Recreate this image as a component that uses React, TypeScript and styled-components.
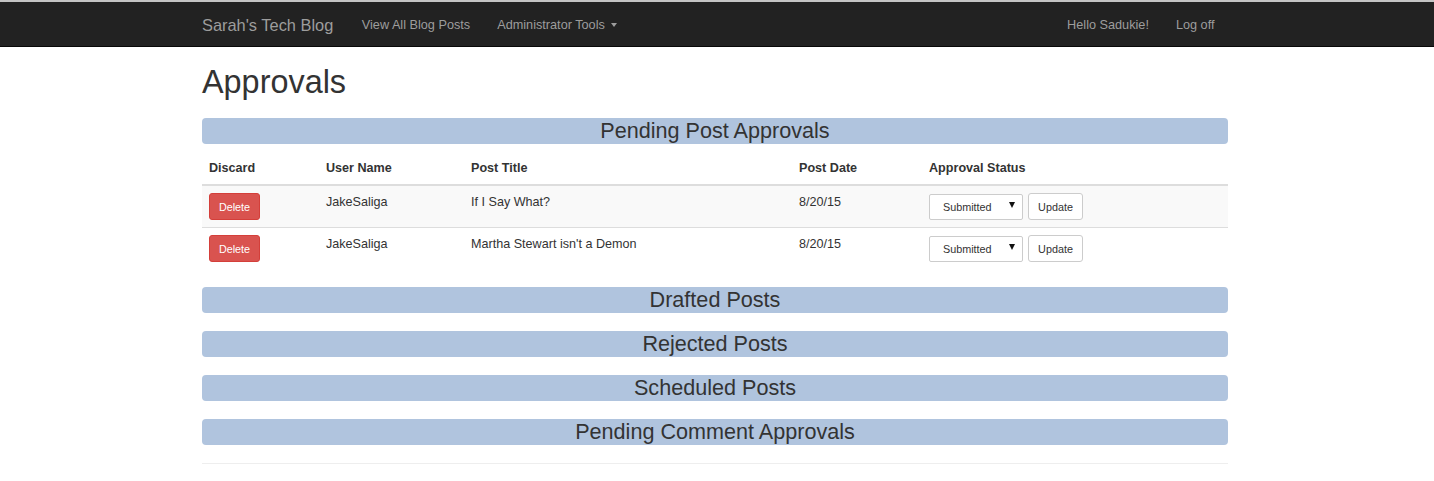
import React from "react";
import styled, { createGlobalStyle } from "styled-components";

const GlobalStyle = createGlobalStyle`
  html, body {
    margin: 0;
    padding: 0;
    background: #fff;
  }
  body {
    font-family: "Liberation Sans", Arial, Helvetica, sans-serif;
    font-size: 12.6px;
    line-height: 18px;
    color: #333;
  }
  * { box-sizing: border-box; }
`;

const TopStrip = styled.div`
  height: 2px;
  background: #c4c4c4;
`;

const Navbar = styled.nav`
  height: 45px;
  background: #222;
  border-bottom: 1px solid #080808;
`;

const NavInner = styled.div`
  width: 1026px;
  margin-left: 202px;
  height: 100%;
  display: flex;
  align-items: center;
  justify-content: space-between;
`;

const NavGroup = styled.div`
  display: flex;
  align-items: center;
  height: 100%;
`;

const Brand = styled.a`
  font-size: 16.4px;
  color: #9d9d9d;
  text-decoration: none;
  padding: 0 15px 0 0;
  line-height: 44px;
  margin-top: 1px;
`;

const NavLink = styled.a`
  font-size: 12.7px;
  color: #9d9d9d;
  text-decoration: none;
  padding: 0 13.5px;
  line-height: 44px;
  display: flex;
  align-items: center;
  margin-top: 1px;
`;

const Caret = styled.span`
  display: inline-block;
  width: 0;
  height: 0;
  margin-left: 6px;
  margin-top: 1px;
  border-top: 4px solid #9d9d9d;
  border-left: 3.5px solid transparent;
  border-right: 3.5px solid transparent;
`;

const Container = styled.main`
  width: 1026px;
  margin-left: 202px;
`;

const Title = styled.h1`
  font-size: 32.4px;
  line-height: 36px;
  font-weight: 400;
  margin: 17px 0 18px;
  color: #333;
`;

const SectionBar = styled.h3`
  background: #b0c4de;
  border-radius: 4px;
  height: 26px;
  line-height: 26px;
  font-size: 21.6px;
  font-weight: 400;
  text-align: center;
  color: #333;
  margin: 0 0 18px;
`;

const FirstBar = styled(SectionBar)`
  margin-bottom: 8px;
`;

const Table = styled.table`
  width: 100%;
  border-collapse: collapse;
  border-spacing: 0;
  margin-bottom: 18px;
`;

const Th = styled.th<{ $w: number }>`
  width: ${(p) => p.$w}px;
  text-align: left;
  font-weight: 700;
  padding: 7px 7px;
  line-height: 18px;
  vertical-align: bottom;
  border-bottom: 2px solid #ddd;
`;

const Tr = styled.tr<{ $striped?: boolean }>`
  background: ${(p) => (p.$striped ? "#f9f9f9" : "#fff")};
`;

const Td = styled.td`
  padding: 7px 7px;
  line-height: 18px;
  vertical-align: top;
  border-top: 1px solid #ddd;
`;

const DangerButton = styled.button`
  font-family: inherit;
  font-size: 10.8px;
  line-height: 16px;
  height: 27px;
  width: 51px;
  padding: 0;
  color: #fff;
  background: #d9534f;
  border: 1px solid #d43f3a;
  border-radius: 3px;
  cursor: pointer;
`;

const StatusForm = styled.div`
  display: flex;
  align-items: center;
  gap: 5px;
`;

const SelectBox = styled.div`
  width: 94px;
  height: 26px;
  border: 1px solid #ccc;
  border-radius: 2px;
  background: #fff;
  display: flex;
  align-items: center;
  justify-content: space-between;
  padding: 0 7px 0 13px;
  font-size: 10.8px;
  color: #333;
`;

const SelectArrow = styled.span`
  width: 0;
  height: 0;
  margin-top: -3px;
  border-top: 6px solid #111;
  border-left: 3.5px solid transparent;
  border-right: 3.5px solid transparent;
`;

const DefaultButton = styled.button`
  font-family: inherit;
  font-size: 10.8px;
  height: 27px;
  width: 55px;
  padding: 0;
  color: #333;
  background: #fff;
  border: 1px solid #ccc;
  border-radius: 3px;
  cursor: pointer;
`;

const Rule = styled.hr`
  border: 0;
  border-top: 1px solid #eee;
  margin: 18px 0 0;
`;

const rows = [
  { user: "JakeSaliga", title: "If I Say What?", date: "8/20/15" },
  { user: "JakeSaliga", title: "Martha Stewart isn't a Demon", date: "8/20/15" },
];

export default function App() {
  return (
    <>
      <GlobalStyle />
      <TopStrip />
      <Navbar>
        <NavInner>
          <NavGroup>
            <Brand href="#">Sarah's Tech Blog</Brand>
            <NavLink href="#">View All Blog Posts</NavLink>
            <NavLink href="#">
              Administrator Tools
              <Caret />
            </NavLink>
          </NavGroup>
          <NavGroup>
            <NavLink href="#">Hello Sadukie!</NavLink>
            <NavLink href="#">Log off</NavLink>
          </NavGroup>
        </NavInner>
      </Navbar>
      <Container>
        <Title>Approvals</Title>
        <FirstBar>Pending Post Approvals</FirstBar>
        <Table>
          <thead>
            <tr>
              <Th $w={117}>Discard</Th>
              <Th $w={145}>User Name</Th>
              <Th $w={328}>Post Title</Th>
              <Th $w={130}>Post Date</Th>
              <Th $w={306}>Approval Status</Th>
            </tr>
          </thead>
          <tbody>
            {rows.map((r, i) => (
              <Tr key={i} $striped={i % 2 === 0}>
                <Td>
                  <DangerButton>Delete</DangerButton>
                </Td>
                <Td>{r.user}</Td>
                <Td>{r.title}</Td>
                <Td>{r.date}</Td>
                <Td>
                  <StatusForm>
                    <SelectBox role="combobox">
                      <span>Submitted</span>
                      <SelectArrow />
                    </SelectBox>
                    <DefaultButton>Update</DefaultButton>
                  </StatusForm>
                </Td>
              </Tr>
            ))}
          </tbody>
        </Table>
        <SectionBar>Drafted Posts</SectionBar>
        <SectionBar>Rejected Posts</SectionBar>
        <SectionBar>Scheduled Posts</SectionBar>
        <SectionBar>Pending Comment Approvals</SectionBar>
        <Rule />
      </Container>
    </>
  );
}
